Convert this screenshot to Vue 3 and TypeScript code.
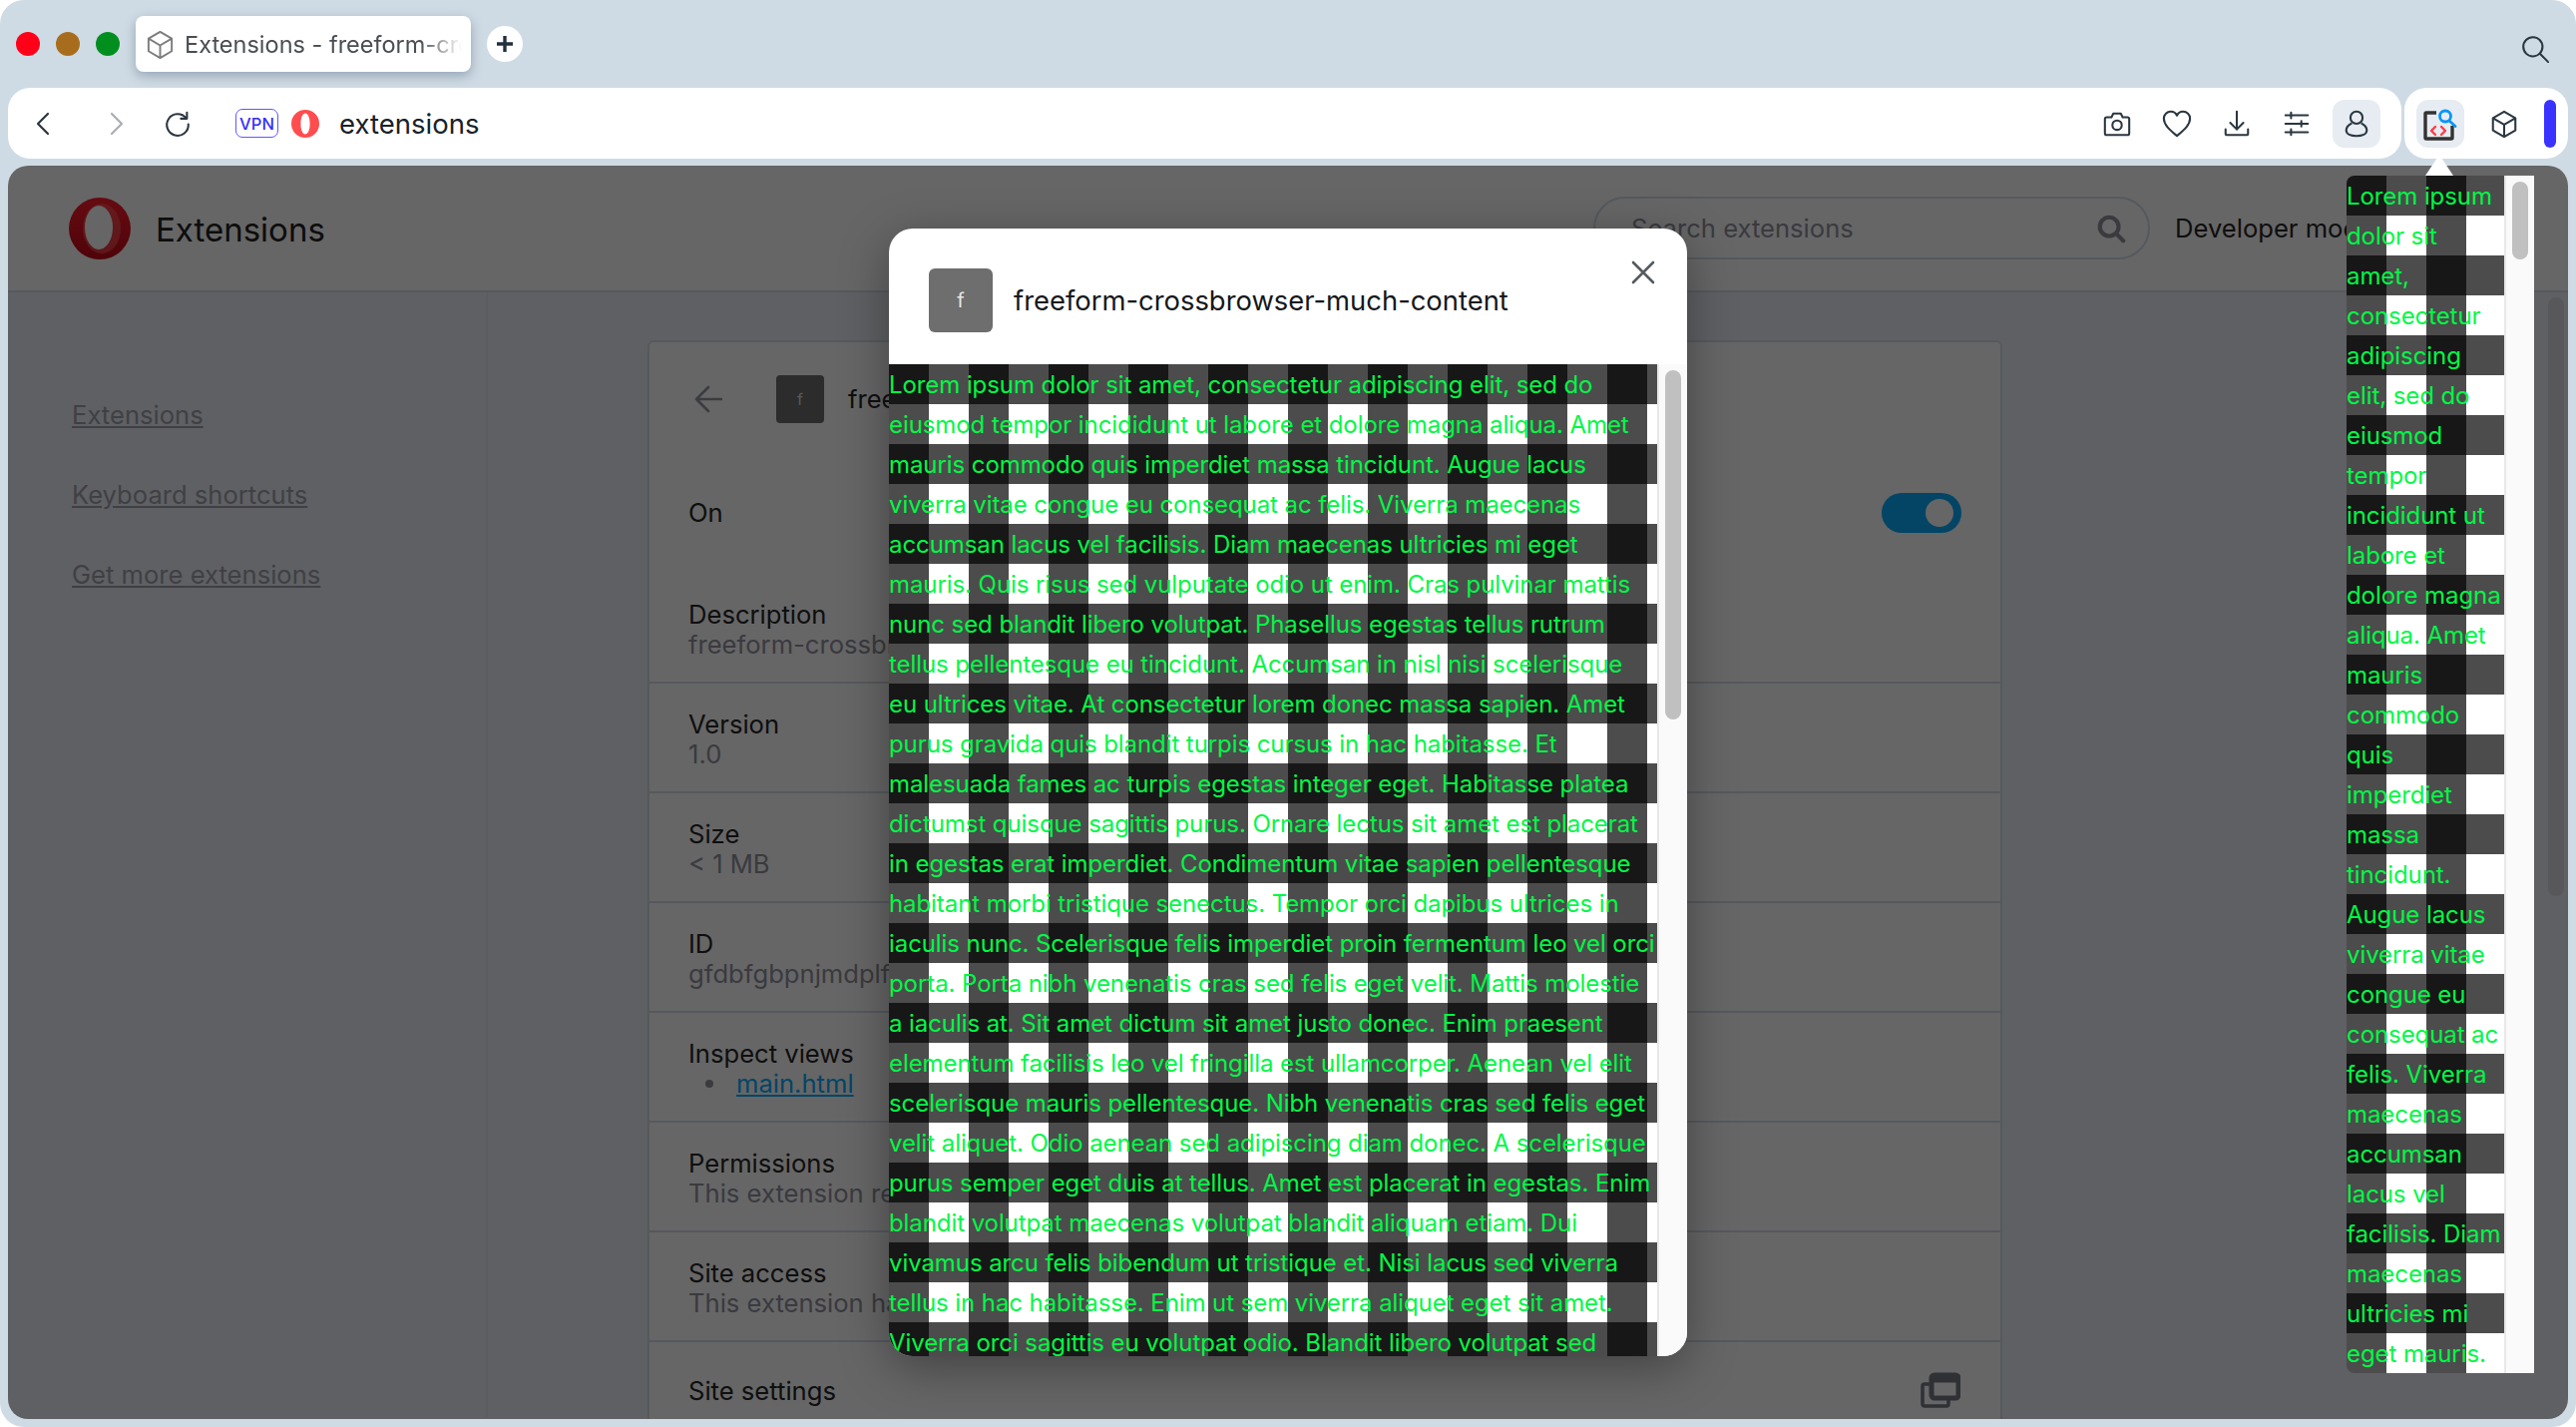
<template>
  <div class="window">
    <div class="tabstrip">
      <div class="lights">
        <span class="light red"></span>
        <span class="light amber"></span>
        <span class="light green"></span>
      </div>
      <div class="tab">
        <svg class="tab-icon" viewBox="0 0 32 32" fill="none" stroke="#7d7d7d" stroke-width="2" stroke-linejoin="round">
          <path d="M16 3 28 10V23L16 30 4 23V10ZM4 10 16 17 28 10M16 17V30" />
        </svg>
        <span class="tab-title">Extensions - freeform-crossbrowser-much-content</span>
      </div>
      <button class="new-tab">
        <svg viewBox="0 0 16 16" width="16" height="16" stroke="#22303c" stroke-width="3.4"><path d="M8 0v16M0 8h16" /></svg>
      </button>
      <svg class="tab-search" viewBox="0 0 32 32" fill="none" stroke="#2a3641" stroke-width="2.4" stroke-linecap="round">
        <circle cx="13.5" cy="13.5" r="11" /><path d="M21.5 21.5 31 31" />
      </svg>
    </div>

    <div class="toolbar-row">
      <div class="toolbar">
        <svg class="nav-icon" viewBox="0 0 32 32" fill="none" stroke="#2a3641" stroke-width="2.2" stroke-linecap="round" stroke-linejoin="round"><path d="M21 6 11 16l10 10" /></svg>
        <svg class="nav-icon fwd" viewBox="0 0 32 32" fill="none" stroke="#a9aeb3" stroke-width="2.2" stroke-linecap="round" stroke-linejoin="round"><path d="M11 6l10 10-10 10" /></svg>
        <svg class="nav-icon reload" viewBox="0 0 32 32" fill="none" stroke="#2a3641" stroke-width="2.2" stroke-linecap="round" stroke-linejoin="round"><path d="M25 10A11.5 11.5 0 1 0 27.5 16.5M26 4v6.500h-6.500" /></svg>
        <span class="vpn">VPN</span>
        <svg class="opera-small" viewBox="0 0 28 28"><path fill-rule="evenodd" fill="#ff4d4f" d="M14 0a14 14 0 1 0 0 28 14 14 0 0 0 0-28Zm0 3.500c2.700 0 4.600 4.500 4.600 10.500S16.700 24.500 14 24.500 9.400 20 9.400 14 11.300 3.500 14 3.500Z" /></svg>
        <span class="address">extensions</span>
        <div class="tools">
          <svg class="tool" viewBox="0 0 32 32" fill="none" stroke="#2a3641" stroke-width="2.200" stroke-linejoin="round"><path d="M5 9h5l2-4h8l2 4h5a2 2 0 0 1 2 2v15a2 2 0 0 1-2 2H5a2 2 0 0 1-2-2V11a2 2 0 0 1 2-2Z" /><circle cx="16" cy="17.500" r="5" /></svg>
          <svg class="tool" viewBox="0 0 32 32" fill="none" stroke="#2a3641" stroke-width="2.200" stroke-linejoin="round"><path d="M16 29C9 23 2 17.500 2 10.500 2 6 5.500 3 9.500 3c2.800 0 5.300 1.600 6.500 4.200C17.200 4.600 19.700 3 22.500 3 26.500 3 30 6 30 10.500 30 17.500 23 23 16 29Z" /></svg>
          <svg class="tool" viewBox="0 0 32 32" fill="none" stroke="#2a3641" stroke-width="2.200" stroke-linecap="round" stroke-linejoin="round"><path d="M16 3v19M9 15l7 7 7-7M4 22v5a1 1 0 0 0 1 1h22a1 1 0 0 0 1-1v-5" /></svg>
          <svg class="tool" viewBox="0 0 32 32" fill="none" stroke="#2a3641" stroke-width="2.200" stroke-linecap="round"><path d="M4 7h24M4 16h24M4 25h24M10 4v6M21 13v6M10 22v6" /></svg>
          <span class="tool-box">
            <svg class="tool" viewBox="0 0 32 32" fill="none" stroke="#2a3641" stroke-width="2.200"><circle cx="16" cy="9.500" r="6.500" /><path d="M11 15.500C7 17.500 5 20 5 23c0 4 5 6 11 6s11-2 11-6c0-3-2-5.500-6-7.500" /></svg>
          </span>
        </div>
      </div>
      <div class="extbar">
        <span class="tool-box">
          <svg viewBox="0 0 48 48" width="48" height="48" fill="none">
            <path d="M20 13H10a1 1 0 0 0-1 1v24a1 1 0 0 0 1 1h25a1 1 0 0 0 1-1V26" stroke="#333" stroke-width="3.400" />
            <path d="M19 27l-4 4 4 4M25 27l4 4-4 4" stroke="#ff3b45" stroke-width="2.400" stroke-linecap="round" stroke-linejoin="round" />
            <circle cx="29" cy="16.500" r="5.500" stroke="#0a95f5" stroke-width="2.800" />
            <path d="M33 21l6 5.500" stroke="#0a95f5" stroke-width="2.800" stroke-linecap="round" />
          </svg>
        </span>
        <svg class="tool ext-cube" viewBox="0 0 32 32" fill="none" stroke="#2a3641" stroke-width="2.200" stroke-linejoin="round"><path d="M16 3 28 10V23L16 30 4 23V10ZM4 10 16 17 28 10M16 17V30" /></svg>
        <span class="pill"></span>
      </div>
    </div>

    <div class="page">
      <header class="page-header">
        <svg class="logo" viewBox="0 0 62 62">
          <defs>
            <linearGradient id="operaRed" x1="0" y1="0" x2="0" y2="1">
              <stop offset="0" stop-color="#ff1b2d" />
              <stop offset="1" stop-color="#c40a16" />
            </linearGradient>
          </defs>
          <circle cx="31" cy="31" r="31" fill="url(#operaRed)" />
          <ellipse cx="33" cy="31" rx="19" ry="25" fill="#ff5a5f" opacity="0.6" />
          <ellipse cx="30" cy="30" rx="14" ry="22" fill="#fff" />
        </svg>
        <h1 class="page-title">Extensions</h1>
        <div class="search">
          <span class="placeholder">Search extensions</span>
          <svg class="search-icon" viewBox="0 0 32 32" fill="none" stroke="#91919e" stroke-width="4.400" stroke-linecap="round"><circle cx="14" cy="14" r="10" /><path d="M22 22l7 7" /></svg>
        </div>
        <div class="devmode">Developer mode</div>
      </header>

      <div class="page-body">
        <nav class="sidebar">
          <a v-for="link in navLinks" :key="link">{{ link }}</a>
        </nav>
        <main class="main">
          <section class="card">
            <div class="card-head">
              <svg class="back" viewBox="0 0 28 28" fill="none" stroke="#91969f" stroke-width="2.600" stroke-linecap="round" stroke-linejoin="round"><path d="M27 14H2M14 2 2 14l12 12" /></svg>
              <span class="card-icon">f</span>
              <span class="card-name">freeform-crossbrowser-much-content</span>
            </div>
            <div class="on-row">
              <span class="label">On</span>
              <span class="toggle"><span class="knob"></span></span>
            </div>
            <div v-for="row in rows" :key="row.label" class="row">
              <div class="label">{{ row.label }}</div>
              <div v-if="row.value" class="value">{{ row.value }}</div>
              <ul v-if="row.link" class="views"><li><a>{{ row.link }}</a></li></ul>
            </div>
            <div class="row settings">
              <span class="label">Site settings</span>
              <svg class="settings-icon" viewBox="0 0 40 36" fill="none" stroke="#757a85">
                <rect x="2" y="12" width="26" height="22" rx="2" stroke-width="3.500" />
                <rect x="11" y="3" width="27" height="23" rx="3" fill="#fff" stroke-width="5" />
                <path d="M11 7h27" stroke-width="7" />
              </svg>
            </div>
          </section>
        </main>
      </div>
      <div class="page-thumb"></div>

      <div class="dim">
        <div class="modal">
          <div class="modal-head">
            <span class="modal-icon">f</span>
            <span class="modal-title">freeform-crossbrowser-much-content</span>
            <svg class="close" viewBox="0 0 24 24" stroke="#555b60" stroke-width="2.600" stroke-linecap="round"><path d="M2 2l20 20M22 2 2 22" /></svg>
          </div>
          <div class="modal-body">
            <p class="gingham">{{ lorem }}</p>
            <div class="scroll"><span class="thumb modal-thumb"></span></div>
          </div>
        </div>
      </div>
    </div>

    <div class="popup">
      <span class="arrow"></span>
      <p class="gingham">{{ lorem }}</p>
      <div class="scroll"><span class="thumb popup-thumb"></span></div>
    </div>
  </div>
</template>

<script setup lang="ts">
const navLinks = ['Extensions', 'Keyboard shortcuts', 'Get more extensions']

const rows: { label: string; value?: string; link?: string }[] = [
  { label: 'Description', value: 'freeform-crossbrowser-much-content' },
  { label: 'Version', value: '1.0' },
  { label: 'Size', value: '< 1 MB' },
  { label: 'ID', value: 'gfdbfgbpnjmdplfcamgdbjkgpmonbmplf' },
  { label: 'Inspect views', link: 'main.html' },
  { label: 'Permissions', value: 'This extension requires no special permissions.' },
  { label: 'Site access', value: 'This extension has no additional site access.' },
]

// two no-break spaces keep the line ends where the reference has them
const lorem =
  'Lorem ipsum dolor sit amet, consectetur adipiscing elit, sed do eiusmod tempor incididunt ut labore et dolore magna aliqua. Amet mauris commodo quis imperdiet massa tincidunt. Augue lacus viverra vitae congue eu consequat ac felis. Viverra maecenas accumsan lacus vel facilisis. Diam maecenas ultricies mi eget mauris. Quis risus sed vulputate odio ut enim. Cras pulvinar mattis nunc sed blandit libero volutpat. Phasellus egestas tellus rutrum tellus pellentesque eu tincidunt. Accumsan in nisl nisi scelerisque eu\u00a0ultrices vitae. At consectetur lorem donec massa sapien. Amet purus gravida quis blandit turpis cursus in hac habitasse. Et malesuada fames ac turpis egestas integer eget. Habitasse platea dictumst quisque sagittis purus. Ornare lectus sit amet est placerat in egestas erat imperdiet. Condimentum vitae sapien pellentesque habitant morbi tristique senectus. Tempor orci dapibus ultrices in iaculis nunc. Scelerisque felis imperdiet proin fermentum leo vel orci porta. Porta nibh venenatis cras sed felis eget velit. Mattis molestie a iaculis at. Sit amet dictum sit amet justo donec. Enim praesent elementum facilisis leo vel fringilla est ullamcorper. Aenean vel elit scelerisque mauris pellentesque. Nibh venenatis cras sed felis eget velit aliquet. Odio aenean sed adipiscing diam donec. A scelerisque purus semper eget duis at tellus. Amet est placerat in egestas. Enim blandit volutpat maecenas volutpat blandit aliquam etiam. Dui vivamus arcu felis bibendum ut tristique et. Nisi lacus sed viverra tellus in hac habitasse. Enim ut sem viverra aliquet eget sit amet. Viverra orci sagittis eu volutpat odio. Blandit libero volutpat sed cras\u00a0ornare arcu.'
</script>

<style>
html,
body {
  margin: 0;
  background: #fff;
  overflow: hidden;
}
</style>

<style scoped>
* {
  box-sizing: border-box;
}
.window {
  position: relative;
  width: 2582px;
  height: 1430px;
  background: #cfdbe4;
  border-radius: 24px;
  overflow: hidden;
  display: flex;
  flex-direction: column;
  font-family: Inter, 'Liberation Sans', sans-serif;
  color: #262626;
}

/* tab strip */
.tabstrip {
  height: 88px;
  flex: none;
  display: flex;
  align-items: center;
  padding: 0 27px 0 16px;
}
.lights {
  display: flex;
  gap: 16px;
  width: 120px;
}
.light {
  width: 24px;
  height: 24px;
  border-radius: 50%;
}
.red {
  background: #ff0018;
}
.amber {
  background: #a86d1c;
}
.green {
  background: #008f1f;
}
.tab {
  width: 336px;
  height: 56px;
  background: #fff;
  border-radius: 8px;
  box-shadow: 0 4px 12px rgba(60, 85, 110, 0.4);
  display: flex;
  align-items: center;
  padding: 0 9px 0 9px;
  gap: 9px;
}
.tab-icon {
  width: 31px;
  height: 31px;
  flex: none;
}
.tab-title {
  font-size: 23.5px;
  color: #4a4e52;
  white-space: nowrap;
  overflow: hidden;
  -webkit-mask-image: linear-gradient(90deg, #000 85%, transparent 100%);
  mask-image: linear-gradient(90deg, #000 85%, transparent 100%);
}
.new-tab {
  width: 36px;
  height: 36px;
  margin-left: 16px;
  border: none;
  border-radius: 50%;
  background: #fff;
  display: flex;
  align-items: center;
  justify-content: center;
  padding: 0;
}
.tab-search {
  width: 28px;
  height: 28px;
  margin-left: auto;
  margin-top: 10px;
}

/* toolbar */
.toolbar-row {
  height: 71px;
  flex: none;
  display: flex;
  gap: 3px;
  padding: 0 8px;
}
.toolbar,
.extbar {
  background: #fff;
  border-radius: 22px;
  display: flex;
  align-items: center;
}
.toolbar {
  width: 2400px;
  padding-left: 19px;
}
.extbar {
  width: 164px;
  padding-left: 12px;
}
.nav-icon {
  width: 32px;
  height: 32px;
  flex: none;
}
.fwd {
  margin-left: 42px;
}
.reload {
  margin-left: 30px;
  width: 30px;
  height: 30px;
}
.vpn {
  margin-left: 43px;
  width: 43px;
  height: 29px;
  border: 1.5px solid #5e58ff;
  border-radius: 7px;
  font-size: 16.5px;
  font-weight: 500;
  color: #352dff;
  display: flex;
  align-items: center;
  justify-content: center;
}
.opera-small {
  width: 28px;
  height: 28px;
  margin-left: 13px;
  flex: none;
}
.address {
  margin-left: 20px;
  font-size: 27.5px;
  color: #18222b;
}
.tools {
  margin-left: auto;
  display: flex;
  align-items: center;
  padding-right: 21px;
}
.tool {
  width: 30px;
  height: 30px;
  flex: none;
  margin-right: 30px;
}
.tools .tool-box .tool {
  margin: 0;
}
.tool-box {
  width: 48px;
  height: 48px;
  border-radius: 12px;
  background: #e6ecf1;
  display: flex;
  align-items: center;
  justify-content: center;
  flex: none;
}
.tools .tool-box {
  margin-left: -9px;
}
.ext-cube {
  margin-left: 25px;
  margin-right: 25px;
}
.pill {
  width: 12px;
  height: 48px;
  border-radius: 6px;
  background: #3a32ff;
}

/* page behind the modal */
.page {
  position: relative;
  flex: none;
  height: 1256px;
  margin: 7px 8px 0;
  background: #eef0f7;
  border-radius: 20px;
  overflow: hidden;
}
.page-header {
  height: 127px;
  background: #fff;
  border-bottom: 2px solid #d4dfeb;
  display: flex;
  align-items: center;
  padding-left: 61px;
}
.logo {
  width: 62px;
  height: 62px;
  flex: none;
}
.page-title {
  margin: 2px 0 0 25px;
  font-size: 33px;
  font-weight: 400;
  color: #222;
}
.search {
  margin-left: auto;
  width: 558px;
  height: 63px;
  border: 2px solid #d4dfeb;
  border-radius: 32px;
  display: flex;
  align-items: center;
  justify-content: space-between;
  padding: 0 22px 0 36px;
}
.placeholder {
  font-size: 25.6px;
  color: #91919f;
}
.search-icon {
  width: 30px;
  height: 30px;
}
.devmode {
  width: 419px;
  flex: none;
  padding-left: 25px;
  font-size: 25.6px;
  color: #262626;
  white-space: nowrap;
}
.page-body {
  display: flex;
}
.sidebar {
  width: 481px;
  flex: none;
  border-right: 2px solid #e3e6ee;
  padding: 107px 0 0 64px;
  display: flex;
  flex-direction: column;
  gap: 48px;
  height: 1127px;
}
.sidebar a {
  font-size: 25.6px;
  line-height: 32px;
  color: #9ea0aa;
  text-decoration: underline;
}
.main {
  padding: 48px 0 0 160px;
}
.card {
  width: 1358px;
  background: #fff;
  border: 2px solid #d4dfeb;
  border-radius: 6px;
}
.card-head {
  height: 115px;
  display: flex;
  align-items: center;
  padding: 0 0 0 45px;
  margin-top: -1px;
}
.back {
  width: 28px;
  height: 28px;
  flex: none;
}
.card-icon {
  width: 48px;
  height: 48px;
  margin-left: 54px;
  border-radius: 4px;
  background: #6e6e6e;
  color: #ddd;
  font-size: 16px;
  display: flex;
  align-items: center;
  justify-content: center;
}
.card-name {
  margin-left: 24px;
  font-size: 25.6px;
  color: #262626;
}
.on-row {
  height: 118px;
  display: flex;
  align-items: center;
  justify-content: space-between;
  padding: 0 39px 4px;
}
.label {
  font-size: 25.6px;
  line-height: 30px;
  color: #262626;
}
.toggle {
  width: 80px;
  height: 40px;
  border-radius: 20px;
  background: #0aadff;
  display: flex;
  align-items: center;
  justify-content: flex-end;
  padding-right: 8px;
}
.knob {
  width: 28px;
  height: 28px;
  border-radius: 50%;
  background: #fff;
}
.row {
  height: 110px;
  padding: 26px 39px 0;
  border-bottom: 2px solid #d4dfeb;
}
.value {
  font-size: 25.6px;
  line-height: 30px;
  color: #91919f;
  white-space: nowrap;
}
.views {
  margin: 0;
  padding-left: 17px;
  list-style: none;
  font-size: 25.6px;
  line-height: 30px;
  color: #91919f;
}
.views li {
  display: flex;
  align-items: center;
}
.views li::before {
  content: '';
  width: 8px;
  height: 8px;
  margin-right: 23px;
  border-radius: 50%;
  background: #91919f;
}
.views a {
  color: #0aadff;
  text-decoration: underline;
}
.settings {
  display: flex;
  align-items: flex-start;
  justify-content: space-between;
  padding-top: 34px;
  padding-right: 40px;
  border-bottom: none;
}
.settings-icon {
  width: 40px;
  height: 36px;
  margin-top: -4px;
}
.page-thumb {
  position: absolute;
  right: 4px;
  top: 132px;
  width: 16px;
  height: 600px;
  border-radius: 8px;
  background: #dcdde0;
}

/* modal */
.dim {
  position: absolute;
  inset: 0;
  background: rgba(0, 0, 0, 0.6);
  display: flex;
  justify-content: center;
  padding-top: 63px;
}
.modal {
  width: 800px;
  height: 1130px;
  background: #fff;
  border-radius: 24px;
  box-shadow: 0 12px 48px rgba(0, 0, 0, 0.35);
  overflow: hidden;
  display: flex;
  flex-direction: column;
}
.modal-head {
  position: relative;
  height: 136px;
  flex: none;
  display: flex;
  align-items: center;
  padding: 8px 0 0 40px;
}
.modal-icon {
  width: 64px;
  height: 64px;
  flex: none;
  border-radius: 6px;
  background: #6e6e6e;
  color: #e6e6e6;
  font-size: 20px;
  display: flex;
  align-items: center;
  justify-content: center;
}
.modal-title {
  margin-left: 21px;
  font-size: 27.4px;
  color: #15181b;
}
.close {
  position: absolute;
  right: 32px;
  top: 32px;
  width: 24px;
  height: 24px;
}
.modal-body {
  flex: 1;
  min-height: 0;
  display: flex;
  overflow: hidden;
}
.gingham {
  flex: 1;
  margin: 0;
  padding-top: 1px;
  font-size: 24px;
  letter-spacing: -0.08px;
  line-height: 40px;
  color: #00f846;
  background-color: #fff;
  background-image: linear-gradient(90deg, rgba(0, 0, 0, 0.7) 50%, transparent 50%),
    linear-gradient(rgba(0, 0, 0, 0.7) 50%, transparent 50%);
  background-size: 80px 80px;
}
.scroll {
  width: 30px;
  flex: none;
  background: #fafafa;
  border-left: 2px solid #e8e8e8;
  padding: 6px 6px 0;
}
.thumb {
  display: block;
  width: 16px;
  border-radius: 8px;
  background: #c0c0c0;
}
.modal-thumb {
  height: 350px;
}
.popup-thumb {
  height: 78px;
}

/* extension popup */
.popup {
  position: absolute;
  left: 2352px;
  top: 176px;
  width: 188px;
  height: 1200px;
  display: flex;
}
.popup .gingham {
  overflow: hidden;
  border-radius: 8px 0 0 8px;
}
.arrow {
  position: absolute;
  left: 79px;
  top: -21px;
  width: 0;
  height: 0;
  border-left: 14px solid transparent;
  border-right: 14px solid transparent;
  border-bottom: 21px solid #fff;
}
</style>
